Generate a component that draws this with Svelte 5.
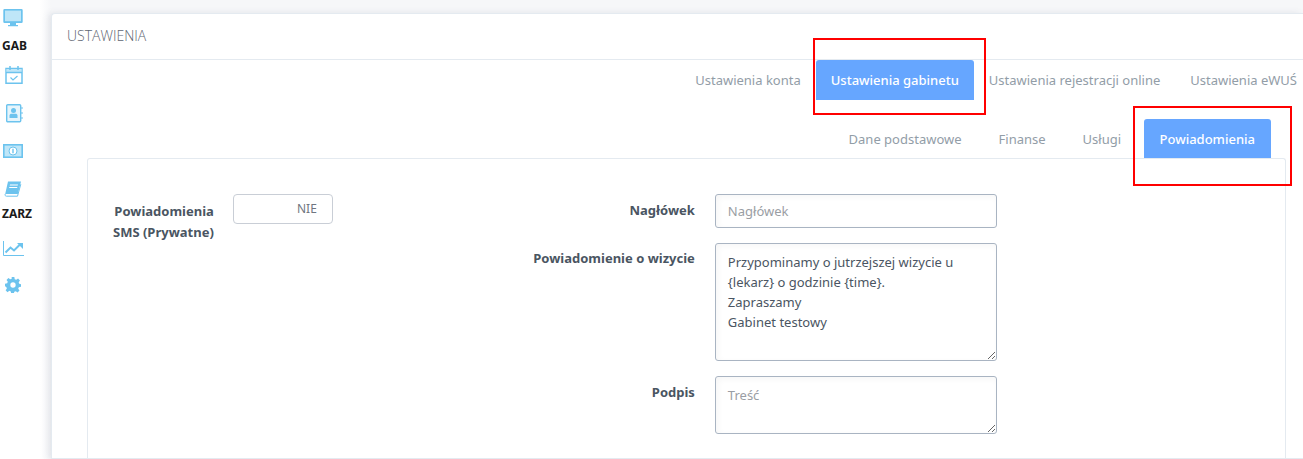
<script>
  const mainTabs = [
    { label: 'Ustawienia konta' },
    { label: 'Ustawienia gabinetu', active: true },
    { label: 'Ustawienia rejestracji online' },
    { label: 'Ustawienia eWUŚ' }
  ];
  const subTabs = [
    { label: 'Dane podstawowe' },
    { label: 'Finanse' },
    { label: 'Usługi' },
    { label: 'Powiadomienia', active: true }
  ];
  const message = 'Przypominamy o jutrzejszej wizycie u {lekarz} o godzinie {time}.\nZapraszamy\nGabinet testowy';
</script>

<div class="page">
  <aside class="sidebar">
    <svg class="ic first" viewBox="0 0 20 20" width="20" height="20"><path fill="#6cc3ee" d="M1.5 1h17A1.2 1.2 0 0 1 19.7 2.2v11.6A1.2 1.2 0 0 1 18.500 15H1.500A1.200 1.200 0 0 1 .3 13.800V2.200A1.200 1.200 0 0 1 1.500 1z"/><path fill="#bfe6f8" d="M2 2.600h16v10.600H2z"/><path fill="#6cc3ee" d="M7 15h6v2h2v1.200H5V17h2z"/></svg>
    <div class="group">GAB</div>
    <svg class="ic cal" viewBox="0 0 20 20" width="20" height="20"><path fill="none" stroke="#6cc3ee" stroke-width="1.500" d="M2 3.500h16v14.800H2z"/><path fill="#bfe6f8" d="M2.500 4h15v3h-15z"/><path fill="none" stroke="#6cc3ee" stroke-width="1.500" d="M6 1v4M14 1v4M2 7.500h16"/><path fill="none" stroke="#6cc3ee" stroke-width="1.200" d="m6.500 12.500 2.500 2.500 4.500-4"/></svg>
    <svg class="ic book" viewBox="0 0 20 20" width="20" height="20"><rect x="2.700" y="1.700" width="14" height="17" rx="1" fill="#e6f5fc" stroke="#6cc3ee" stroke-width="1.400"/><circle cx="9.500" cy="7.500" r="2.500" fill="#6cc3ee"/><path fill="#6cc3ee" d="M5.500 15v-2.500c0-1.200 1-1.800 2-1.800h4c1 0 2 .6 2 1.800V15z"/><path stroke="#6cc3ee" stroke-width="1.200" d="M17 5h2M17 10h2M17 15h2"/></svg>
    <svg class="ic money" viewBox="0 0 20 14" width="20" height="14"><rect x=".8" y=".8" width="18.400" height="12.400" fill="#bfe6f8" stroke="#6cc3ee" stroke-width="1.600"/><circle cx="10" cy="7" r="4" fill="#fff" stroke="#6cc3ee"/><path stroke="#6cc3ee" stroke-width="1.400" d="M10 4.800v4.400"/></svg>
    <svg class="ic note" viewBox="0 0 18 16" width="18" height="16"><path fill="#6cc3ee" d="M4 .5h13L13.800 13H1.200z"/><path fill="#fff" d="M6 3.500h8l-.3 1H5.700zM5.400 6h8l-.3 1h-8z"/><path fill="none" stroke="#6cc3ee" d="M1.200 13c-.5 1.400.3 2.200 1.300 2.200h11l3.300-12"/></svg>
    <div class="group zarz">ZARZ</div>
    <svg class="ic chart" viewBox="0 0 21 15" width="21" height="15"><path fill="none" stroke="#6cc3ee" stroke-width="1" d="M.5 0v14.500h20.500"/><path fill="none" stroke="#6cc3ee" stroke-width="2" d="m2.500 11.500 5-5 3.500 3 6-6"/><path fill="#6cc3ee" d="M14 2h6v6z"/></svg>
    <svg class="ic gear" viewBox="0 0 24 24" width="16" height="16"><path fill="#6cc3ee" fill-rule="evenodd" d="M10 0h4l.6 3.300 2.200.9L19.600 2.300l2.800 2.800-1.900 2.800.9 2.200L24 10.700v4l-3.300.6-.9 2.200 1.900 2.800-2.800 2.800-2.800-1.900-2.200.9-.6 2.900h-4l-.6-3.300-2.200-.9-2.800 1.900-2.800-2.800 1.900-2.800-.9-2.200L0 14v-4l3.300-.6.900-2.200L2.300 4.400l2.800-2.800 2.800 1.900 2.200-.9zM12 8a4 4 0 1 0 0 8 4 4 0 0 0 0-8z"/></svg>
  </aside>

  <main class="card">
    <header class="card-head">USTAWIENIA</header>

    <nav class="tabs main-tabs">
      {#each mainTabs as t}
        <span class="tab" class:active={t.active}>{t.label}</span>
      {/each}
    </nav>

    <nav class="tabs sub-tabs">
      {#each subTabs as t}
        <span class="tab" class:active={t.active}>{t.label}</span>
      {/each}
    </nav>

    <section class="panel">
      <div class="left">
        <div class="label sms">Powiadomienia<br />SMS (Prywatne)</div>
        <div class="toggle"><span>NIE</span></div>
      </div>
      <div class="form">
        <div class="label l1">Nagłówek</div>
        <input class="field" placeholder="Nagłówek" />
        <div class="label l2">Powiadomienie o wizycie</div>
        <textarea class="field visit" value={message}></textarea>
        <div class="label l3">Podpis</div>
        <textarea class="field sign" placeholder="Treść"></textarea>
      </div>
    </section>
  </main>

  <div class="mark mark-a"></div>
  <div class="mark mark-b"></div>
</div>

<style>
  :global(body) {
    margin: 0;
    background: #fff;
  }
  .page {
    position: relative;
    display: flex;
    width: 1303px;
    height: 459px;
    overflow: hidden;
    font-family: "Noto Sans", "Open Sans", sans-serif;
    font-size: 13px;
    background: linear-gradient(to right, #fff 40px, #f6f7f9 51px);
  }
  .sidebar {
    flex: 0 0 51px;
    display: flex;
    flex-direction: column;
    align-items: flex-start;
    box-sizing: border-box;
  }
  .ic { display: block; flex: none; }
  .first { margin: 8px 0 0 3px; }
  .group {
    margin: 10px 0 0 2px;
    font-size: 12px;
    line-height: 16px;
    font-weight: 700;
    color: #1a1a1a;
  }
  .cal { margin: 11px 0 0 4px; }
  .book { margin: 18px 0 0 4px; }
  .money { margin: 21px 0 0 3px; }
  .note { margin: 23px 0 0 4px; }
  .zarz { margin-top: 9px; }
  .chart { margin: 19px 0 0 3px; }
  .gear { margin: 21px 0 0 5px; }

  .card {
    flex: 1;
    margin-top: 13px;
    background: #fff;
    border: 1px solid #e4eaf0;
    border-right: 0;
    border-radius: 4px 0 0 0;
    box-shadow: -3px 0 6px rgba(90, 100, 120, 0.12);
    display: flex;
    flex-direction: column;
    min-width: 0;
  }
  .card-head {
    height: 45px;
    line-height: 43px;
    padding-left: 15px;
    border-bottom: 1px solid #e4eaf0;
    font-family: "Open Sans", sans-serif;
    font-weight: 300;
    font-size: 14px;
    color: #5e6672;
    flex: none;
  }
  .tabs {
    display: flex;
    justify-content: flex-end;
    flex: none;
  }
  .tab {
    display: block;
    color: #929da7;
    padding: 0 16px;
    border-radius: 3px 3px 0 0;
    white-space: nowrap;
  }
  .tab.active {
    background: #66a6ff;
    color: #fff;
    font-weight: 500;
  }
  .main-tabs {
    height: 40px;
    line-height: 40px;
    padding-right: 0;
    margin-right: -9px;
  }
  .main-tabs .tab { padding: 0 15px; }
  .sub-tabs {
    margin-top: 19px;
    height: 39px;
    line-height: 40px;
    margin-right: 32px;
  }
  .sub-tabs .tab { padding: 0 18.500px; }
  .sub-tabs .tab.active { padding: 0 16px; margin-left: 4px; }

  .panel {
    margin: 0 17px 0 35px;
    flex: 1;
    background: #fff;
    border: 1px solid #e4eaf0;
    border-bottom: 0;
    border-radius: 3px 3px 0 0;
    display: flex;
    align-items: flex-start;
    padding-top: 35px;
  }
  .label {
    font-weight: 700;
    color: #4a5562;
    text-align: right;
    font-size: 13px;
    line-height: 21px;
  }
  .left {
    display: flex;
    align-items: flex-start;
    gap: 19px;
    margin-left: 25px;
  }
  .sms { margin-top: 7px; }
  .toggle {
    box-sizing: border-box;
    width: 100px;
    height: 30px;
    border: 1px solid #c9ced6;
    border-radius: 4px;
    background: #fff;
    color: #6f7680;
    font-size: 12px;
    line-height: 28px;
    text-align: right;
    padding-right: 15px;
  }
  .form {
    margin-left: 177px;
    display: grid;
    grid-template-columns: 185px 282px;
    column-gap: 20px;
    row-gap: 15px;
    width: 487px;
  }
  .l1 { padding-top: 6px; }
  .l2 { padding-top: 5px; }
  .l3 { padding-top: 6px; }
  .field {
    box-sizing: border-box;
    width: 282px;
    display: block;
    margin: 0;
    border: 1px solid #a9b4c2;
    border-radius: 3px;
    padding: 8px 12px;
    font-family: inherit;
    font-size: 13px;
    line-height: 20px;
    color: #4a5562;
    background: #fff;
    box-shadow: inset 2px 2px 6px rgba(0, 0, 0, 0.04);
    outline: none;
  }
  .field::placeholder { color: #9a9ea4; opacity: 1; }
  input.field { height: 34px; }
  .visit { height: 118px; }
  .sign { height: 58px; }

  .mark {
    position: absolute;
    border: 2px solid #f00;
    box-sizing: border-box;
    pointer-events: none;
  }
  .mark-a { left: 813px; top: 38px; width: 173px; height: 77px; }
  .mark-b { left: 1133px; top: 106px; width: 159px; height: 80px; }
</style>
